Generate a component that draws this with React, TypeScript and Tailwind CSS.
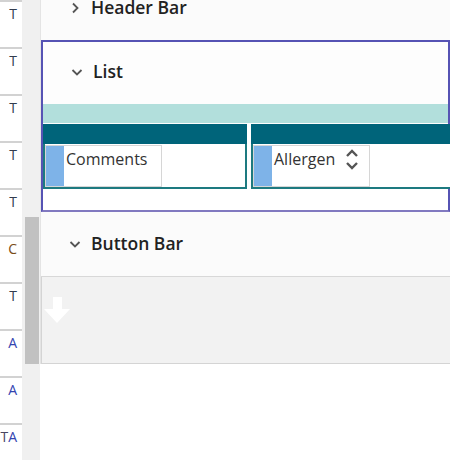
const rows = [
  { t: 'T', c: 'text-[#333c4e]' },
  { t: 'T', c: 'text-[#333c4e]' },
  { t: 'T', c: 'text-[#333c4e]' },
  { t: 'T', c: 'text-[#333c4e]' },
  { t: 'T', c: 'text-[#333c4e]' },
  { t: 'C', c: 'text-[#7a4c16]' },
  { t: 'T', c: 'text-[#333c4e]' },
  { t: 'A', c: 'text-[#3343b0]' },
  { t: 'A', c: 'text-[#3343b0]' },
  { t: 'TA', c: 'text-[#333c4e]' },
]

function Chevron({ open }: { open: boolean }) {
  return (
    <svg width="12" height="12" viewBox="0 0 12 12" className="shrink-0">
      {open ? (
        <path d="M1.5 4 L6 8.5 L10.5 4" fill="none" stroke="#555" strokeWidth="1.8" />
      ) : (
        <path d="M4 1.5 L8.5 6 L4 10.5" fill="none" stroke="#555" strokeWidth="1.8" />
      )}
    </svg>
  )
}

function SectionHeader({ title, open, tall }: { title: string; open: boolean; tall?: boolean }) {
  return (
    <div className={`flex items-center pl-[28px] ${tall ? 'h-[64px] pb-[1px]' : 'h-[62px] pb-[3px]'}`}>
      <Chevron open={open} />
      <span className="ml-[10px] text-[17.5px] font-semibold text-[#222]">{title}</span>
    </div>
  )
}

function Card({ label, sort }: { label: string; sort?: boolean }) {
  return (
    <div className="w-[204px] shrink-0">
      <div className="h-[20px] bg-[#00647a]" />
      <div className="h-[45px] border-x-2 border-b-2 border-[#1d7a80] bg-white pt-[1px]">
        <div className="flex h-[42px] w-[117px] border border-[#d6d6d6]">
          <div className="w-[18px] bg-[#7eb3e8]" />
          <span className="ml-[2px] pt-[2px] text-[16px] leading-[22px] text-[#333]">{label}</span>
          {sort && (
            <svg width="14" height="24" viewBox="0 0 14 24" className="ml-auto mr-[10px] mt-[1px]">
              <path d="M2 9 L7 4 L12 9" fill="none" stroke="#555" strokeWidth="2.4" />
              <path d="M2 16 L7 21 L12 16" fill="none" stroke="#555" strokeWidth="2.4" />
            </svg>
          )}
        </div>
      </div>
    </div>
  )
}

export default function App() {
  return (
    <div className="flex h-[460px] w-[450px] overflow-hidden bg-white font-['Open_Sans',sans-serif]">
      <div className="w-[22px] shrink-0 overflow-hidden">
        {rows.map((r, i) => (
          <div
            key={i}
            className={`h-[47px] border-t-2 border-[#d2d2d2] pr-[5px] pt-[3px] text-right text-[14px] leading-[18px] whitespace-nowrap ${r.c}`}
          >
            {r.t === 'TA' ? (
              <>
                <span className="text-[#4a4660]">T</span>
                <span className="text-[#3343b0]">A</span>
              </>
            ) : (
              r.t
            )}
          </div>
        ))}
      </div>

      <div className="w-[18px] shrink-0 bg-[#f0f0f0] pl-[3px] pr-[1px] pt-[217px]">
        <div className="h-[147px] bg-[#c1c1c1]" />
      </div>

      <div className="w-[410px] shrink-0 overflow-hidden">
        <div className="w-[410px] border-l border-[#e4e4e4]">
          <div className="-mt-[22px] bg-[#fbfbfb]">
            <SectionHeader title="Header Bar" open={false} />
          </div>

          <div className="border-2 border-[#5653b4] border-b-[#8179c0] bg-[#fdfdfd]">
            <SectionHeader title="List" open={true} />
            <div className="h-[19px] bg-[#b2dfdc]" />
            <div className="mt-[1px] flex gap-[4px] bg-white">
              <Card label="Comments" />
              <Card label="Allergen" sort />
            </div>
            <div className="h-[21px] bg-white" />
          </div>

          <div className="border-b border-[#d8d8d8] bg-[#fbfbfb]">
            <SectionHeader title="Button Bar" open={true} tall />
          </div>

          <div className="h-[87px] border-b border-l border-[#d4d4d4] bg-[#f2f2f2] pl-[2px] pt-[20px]">
            <svg width="26" height="26" viewBox="0 0 26 26">
              <rect x="9" y="0" width="9" height="13" fill="#fff" />
              <path d="M0 12 L26 12 L13 26 Z" fill="#fff" />
            </svg>
          </div>
        </div>
      </div>
    </div>
  )
}
